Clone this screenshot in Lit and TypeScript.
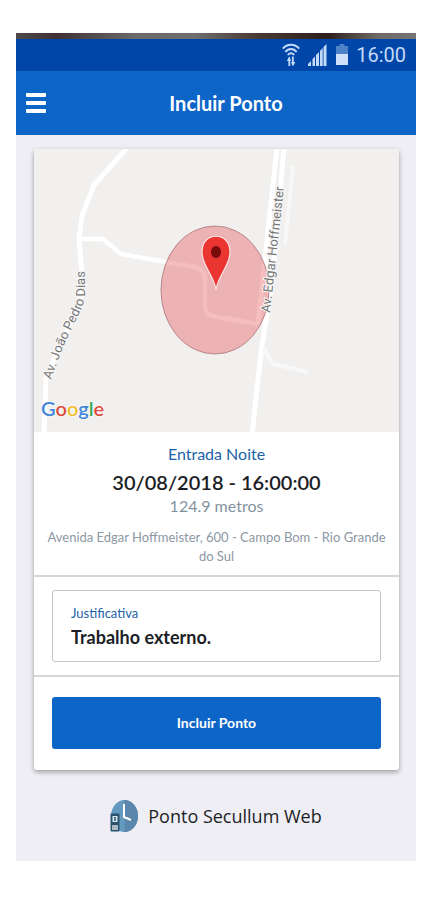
import { LitElement, html, css, svg } from "lit";
import { customElement, property, state } from "lit/decorators.js";

const LOGO_LETTERS: Array<[string, string]> = [
  ["G", "#4285d8"],
  ["o", "#dc4a3d"],
  ["o", "#f0bd2c"],
  ["g", "#4285d8"],
  ["l", "#3aa757"],
  ["e", "#dc4a3d"],
];

@customElement("status-bar")
export class StatusBar extends LitElement {
  static styles = css`
    :host {
      display: block;
    }
    .strip {
      height: 6px;
      background: linear-gradient(
        90deg,
        #4f4a4b 0%,
        #3e3034 10%,
        #6b6b6b 30%,
        #6e6e6c 45%,
        #4a3a34 60%,
        #2c1f1c 78%,
        #6d6862 90%,
        #757575 100%
      );
    }
    .bar {
      display: flex;
      justify-content: flex-end;
      align-items: center;
      height: 32px;
      padding-right: 10px;
      background: #0046a8;
      color: #c3daf8;
    }
    .signal {
      margin: 0 9px 0 8px;
    }
    .clock {
      margin-left: 8px;
      font: 400 20px/32px Roboto, sans-serif;
    }
  `;

  render() {
    return html`
      <div class="strip"></div>
      <div class="bar">
        <svg width="18" height="24" viewBox="0 0 18 24" fill="none" stroke="currentColor" aria-hidden="true">
          <path d="M.8 5.6C5 .4 13 .4 17.200 5.600" stroke-width="2" />
          <path d="M3.300 9C6.500 5 11.500 5 14.700 9" stroke-width="2" />
          <path d="M5.800 12C7.700 9.600 10.300 9.600 12.200 12" stroke-width="2" />
          <path d="M7.300 23V14.500M10.800 13.500V22" stroke-width="1.800" />
          <path d="M4.800 18l2.500-4.500 1.600 4.500zM9.200 19l1.600 4.500 2.600-4.500z" fill="currentColor" stroke="none" />
        </svg>
        <svg class="signal" width="19" height="23" viewBox="0 0 19 23" fill="currentColor" aria-hidden="true">
          <path d="M0 22v-2l3-3v5zM4.500 22v-7l2.500-2.500V22zM8 22V11l3-3v14zM12 22V7l2.700-3v18zM15.500 22V3L18.500 0v22z" />
        </svg>
        <svg width="12" height="22" viewBox="0 0 12 22" aria-hidden="true">
          <path d="M3.500 0h5v2H12v8H0V2h3.500z" fill="#4d82c8" />
          <path d="M0 10h12v11H0z" fill="#cfe1f9" />
        </svg>
        <span class="clock">16:00</span>
      </div>
    `;
  }
}

@customElement("location-map")
export class LocationMap extends LitElement {
  static styles = css`
    :host {
      display: block;
    }
    .map {
      display: block;
      width: 100%;
      height: 283px;
      background: #f1f0ef;
    }
    .label {
      font: 13px Roboto, sans-serif;
      fill: #777;
      stroke: #f8f8f8;
      stroke-width: 2px;
      paint-order: stroke;
    }
    .logo {
      font: 600 20px Lato, sans-serif;
      stroke: #fff;
      stroke-width: 1px;
      paint-order: stroke;
    }
  `;

  render() {
    return html`
      <svg class="map" viewBox="0 0 365 283" preserveAspectRatio="xMidYMid slice" role="img" aria-label="Mapa">
        <defs>
          <path id="dias" d="M17 231L24 212Q28 199 34 188L45 165Q51 153 51 144V100" />
          <path id="edgar" d="M236 164L252 20" />
        </defs>
        <g fill="none" stroke="#fff" stroke-linejoin="round">
          <path d="M93 -1L60 36L48 67L45 89L48 125V146L31 186L12 229L10 285" stroke-width="5" />
          <path d="M47 90H69L87 105L132 113L160 118Q171 120 171 129V158Q171 165 178 167L224 175" stroke-width="4.500" />
          <path d="M243 -1L224 175" stroke-width="5" />
          <path d="M250 -1L238 132L227 204L218 285" stroke-width="5" />
          <path d="M259 17L251 95M229 198L239 215L274 223" stroke="#f8f8f8" stroke-width="4" />
        </g>
        <ellipse cx="181" cy="141" rx="54" ry="64" fill="#e64b50" fill-opacity=".37" stroke="#b98588" stroke-width="1" />
        <text class="label"><textPath href="#dias">Av. João Pedro Dias</textPath></text>
        <text class="label"><textPath href="#edgar">Av. Edgar Hoffmeister</textPath></text>
        <path
          d="M182 141C180 126 168 117 168 103C168 82 196 82 196 103C196 117 184 126 182 141Z"
          fill="#ea3531"
          stroke="#fbe4e4"
          stroke-width="1.200"
        />
        <ellipse cx="182" cy="103" rx="5" ry="6" fill="#7a0c0e" />
        <text class="logo" x="7" y="267">${LOGO_LETTERS.map(
          ([letter, color]) => svg`<tspan fill=${color}>${letter}</tspan>`
        )}</text>
      </svg>
    `;
  }
}

@customElement("app-root")
export class AppRoot extends LitElement {
  @property() address = "Avenida Edgar Hoffmeister, 600 - Campo Bom - Rio Grande do Sul";
  @state() private reason = "Trabalho externo.";

  static styles = css`
    :host {
      display: block;
      padding: 33px 14px 58px 16px;
      background: #fff;
      font-family: Lato, sans-serif;
      color: #1c1e26;
    }
    .screen {
      background: #efeef4;
    }
    .header {
      display: grid;
      grid-template-columns: 40px 1fr 20px;
      align-items: center;
      height: 64px;
      background: #0d65c8;
      color: #fff;
    }
    .menu {
      display: flex;
      justify-content: center;
      padding: 0;
      border: 0;
      background: none;
      color: inherit;
    }
    .title {
      margin: 0;
      text-align: center;
      font-size: 20px;
      font-weight: 700;
      line-height: 24px;
    }
    .content {
      padding: 14px 17px 0 18px;
    }
    .card {
      overflow: hidden;
      border-radius: 3px;
      background: #fff;
      box-shadow: 0 2px 5px rgba(0, 0, 0, 0.35);
    }
    .details {
      padding: 10px 6px 9px;
      text-align: center;
    }
    .details p {
      margin: 0;
    }
    .kind {
      color: #1d62a8;
      font-size: 16px;
      line-height: 24px;
    }
    .time {
      font-size: 20px;
      font-weight: 600;
      line-height: 32px;
    }
    .distance {
      color: #84929e;
      font-size: 16px;
      line-height: 16px;
    }
    .details .address {
      margin-top: 14px;
      color: #8c98a4;
      font-size: 13px;
      line-height: 19px;
    }
    .section {
      padding: 13px 18px;
      border-top: 2px solid #d6d6d6;
    }
    .field {
      display: flex;
      flex-direction: column;
      padding: 11px 18px;
      border: 1px solid #c6c6c6;
      border-radius: 3px;
    }
    .caption {
      color: #1d62a8;
      font-size: 13px;
      line-height: 22px;
    }
    .input {
      width: 100%;
      height: 26px;
      padding: 0;
      border: 0;
      outline: 0;
      background: none;
      color: inherit;
      font: 700 18px/26px Lato, sans-serif;
    }
    .actions {
      padding: 20px 18px 21px;
    }
    .submit {
      display: block;
      width: 100%;
      height: 52px;
      border: 0;
      border-radius: 3px;
      background: #0d65c8;
      color: #fff;
      font: 700 14px/20px Lato, sans-serif;
    }
    .footer {
      display: flex;
      justify-content: center;
      align-items: center;
      gap: 10px;
      padding: 28px 0 27px;
      font: 400 18px/36px "Open Sans", sans-serif;
    }
  `;

  private onInput(event: Event) {
    this.reason = (event.target as HTMLInputElement).value;
  }

  render() {
    return html`
      <div class="screen">
        <status-bar></status-bar>
        <header class="header">
          <button class="menu" aria-label="Menu">
            <svg width="20" height="20" viewBox="0 0 20 20" fill="currentColor">
              <rect width="20" height="4" rx="1" />
              <rect y="8" width="20" height="4" rx="1" />
              <rect y="16" width="20" height="4" rx="1" />
            </svg>
          </button>
          <h1 class="title">Incluir Ponto</h1>
        </header>
        <main class="content">
          <div class="card">
            <location-map></location-map>
            <div class="details">
              <p class="kind">Entrada Noite</p>
              <p class="time">30/08/2018 - 16:00:00</p>
              <p class="distance">124.9 metros</p>
              <p class="address">${this.address}</p>
            </div>
            <div class="section">
              <div class="field">
                <label class="caption" for="reason">Justificativa</label>
                <input class="input" id="reason" type="text" .value=${this.reason} @input=${this.onInput} />
              </div>
            </div>
            <div class="section actions">
              <button class="submit">Incluir Ponto</button>
            </div>
          </div>
        </main>
        <footer class="footer">
          <svg width="28" height="32" viewBox="0 0 28 32" aria-hidden="true">
            <ellipse cx="14.500" cy="16" rx="13.500" ry="16" fill="#659ac0" />
            <path d="M14.500 0a13.500 16 0 0 1 0 32z" fill="#5a87ab" />
            <path d="M14 4V17L21 20" fill="none" stroke="#fff" stroke-width="2" />
            <rect x=".5" y="13.500" width="9" height="18" rx="1" fill="#2c536d" />
            <rect x="2.500" y="16" width="5" height="6" fill="#d5e7f3" />
            <path d="M5 17v4" stroke="#2c536d" stroke-width="1.500" />
            <rect x="2" y="25" width="6" height="5" fill="#a9b9c4" />
          </svg>
          <span>Ponto Secullum Web</span>
        </footer>
      </div>
    `;
  }
}
